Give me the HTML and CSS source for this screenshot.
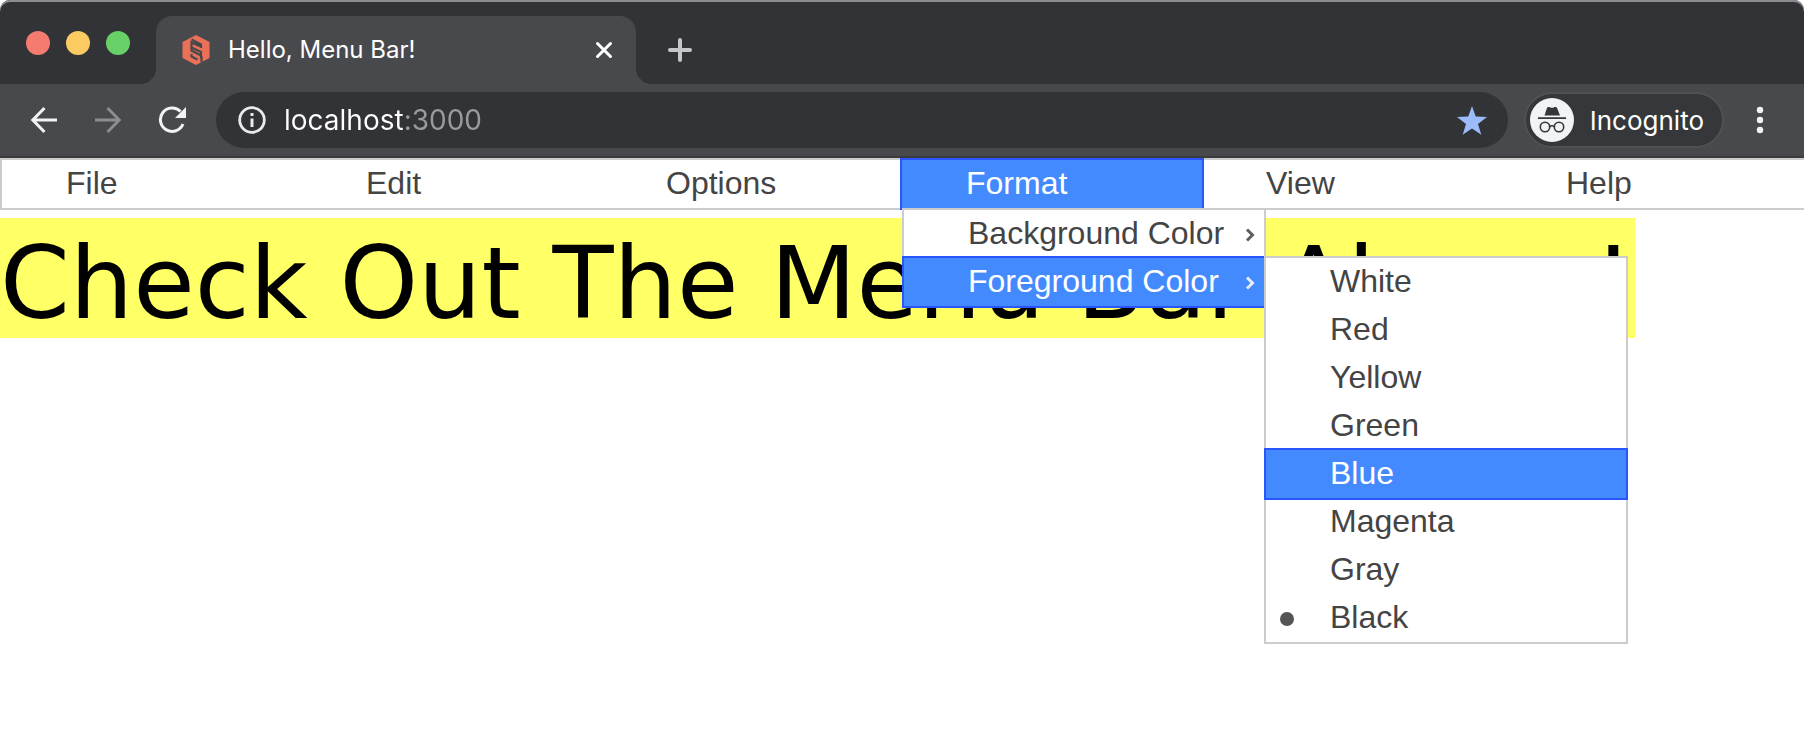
FILE: index.html
```html
<!DOCTYPE html>
<html lang="en">
<head>
<meta charset="utf-8">
<meta name="viewport" content="width=device-width, initial-scale=1">
<title>Hello, Menu Bar!</title>
<link rel="stylesheet" href="styles.css">
</head>
<body>
<header class="chrome">
  <div class="tab-strip">
    <div class="window-controls">
      <button class="light light-close" aria-label="Close window"></button>
      <button class="light light-minimize" aria-label="Minimize window"></button>
      <button class="light light-zoom" aria-label="Zoom window"></button>
    </div>
    <div class="tab">
      <svg class="favicon" viewBox="0 0 28 30" aria-hidden="true">
        <path fill="#ea7157" d="M14 0 27.500 7v16L14 30 .5 23V7z"/>
        <path fill="none" stroke="#48494c" stroke-width="2.200" d="M9.500 4.500 19 9.500v2L9.500 7.500v5l9.500 4.500v3.500M9.500 10.500v5L19 20.500v3M9.500 19v2.500l6 3M19 13v-3M19.500 21v6"/>
      </svg>
      <span class="tab-title">Hello, Menu Bar!</span>
      <button class="icon-button tab-close" aria-label="Close tab">
        <svg width="18" height="18" viewBox="0 0 18 18"><path d="M2.500 2.500l13 13M15.500 2.500l-13 13" stroke="#fff" stroke-width="3" stroke-linecap="round"/></svg>
      </button>
    </div>
    <button class="icon-button new-tab" aria-label="New tab">
      <svg width="24" height="24" viewBox="0 0 24 24"><path d="M12 2v20M2 12h20" stroke="#c5c7cb" stroke-width="4" stroke-linecap="round"/></svg>
    </button>
  </div>
  <div class="toolbar">
    <div class="nav-buttons">
      <button class="icon-button" aria-label="Back">
        <svg width="28" height="28" viewBox="0 0 28 28" fill="none" stroke="#f1f3f4" stroke-width="3"><path d="M27 14H3M14.500 2 2.800 14l11.700 12"/></svg>
      </button>
      <button class="icon-button" aria-label="Forward">
        <svg width="28" height="28" viewBox="0 0 28 28" fill="none" stroke="#8c8d90" stroke-width="3"><path d="M1 14h24M13.500 2l11.700 12-11.700 12"/></svg>
      </button>
      <button class="icon-button" aria-label="Reload">
        <svg width="28" height="28" viewBox="0 0 28 28"><path d="M25 18A11.700 11.700 0 1 1 22.500 5.500" fill="none" stroke="#f1f3f4" stroke-width="3"/><path d="M28 1v11H17z" fill="#f1f3f4"/></svg>
      </button>
    </div>
    <div class="omnibox">
      <button class="icon-button" aria-label="Site information">
        <svg width="28" height="28" viewBox="0 0 28 28"><circle cx="14" cy="14" r="12.300" fill="none" stroke="#e8eaed" stroke-width="2.800"/><path d="M14 7v3M14 12.500v8.500" stroke="#e8eaed" stroke-width="3"/></svg>
      </button>
      <input class="address" type="text" value="localhost:3000" aria-label="Address" spellcheck="false">
      <button class="icon-button" aria-label="Bookmark this page">
        <svg width="30" height="29" viewBox="0 0 30 29"><path fill="#9bbcf8" d="M15 0l3.700 10.600L30 10.900l-9 7 3.300 10.900L15 22.400 5.700 28.800 9 17.900l-9-7 11.300-.3z"/></svg>
      </button>
    </div>
    <button class="incognito">
      <svg width="44" height="44" viewBox="0 0 44 44" aria-hidden="true">
        <circle cx="22" cy="22" r="22" fill="#f1f3f4"/>
        <path fill="#36373a" d="M18.500 9c1.500 0 2 .8 3.500.8S24 9 25.500 9c1 0 1.500.6 1.800 1.500L30 17.500H14.500l2.300-7C17.100 9.600 17.500 9 18.500 9zM8 19.300h28v1.700H8z"/>
        <g fill="none" stroke="#36373a" stroke-width="1.600"><circle cx="15" cy="29" r="4.700"/><circle cx="29" cy="29" r="4.700"/><path d="M19.700 28.500q2.300-1.600 4.600 0"/></g>
      </svg>
      <span>Incognito</span>
    </button>
    <button class="icon-button more" aria-label="Browser menu">
      <svg width="8" height="28" viewBox="0 0 8 28" fill="#f1f3f4"><circle cx="4" cy="4" r="3.200"/><circle cx="4" cy="14" r="3.200"/><circle cx="4" cy="24" r="3.200"/></svg>
    </button>
  </div>
</header>
<main>
  <nav aria-label="Menu bar">
    <ul class="menubar" role="menubar">
      <li><button class="item" role="menuitem">File</button></li>
      <li><button class="item" role="menuitem">Edit</button></li>
      <li><button class="item" role="menuitem">Options</button></li>
      <li>
        <button class="item active" role="menuitem" aria-haspopup="true" aria-expanded="true">Format</button>
        <ul class="menu dropdown" role="menu" aria-label="Format">
          <li>
            <button class="item" role="menuitem" aria-haspopup="true">Background Color
              <svg class="chevron" width="10" height="14" viewBox="0 0 10 14"><path d="M2 1.500 7.500 7 2 12.500" fill="none" stroke="currentColor" stroke-width="3"/></svg>
            </button>
          </li>
          <li>
            <button class="item active" role="menuitem" aria-haspopup="true" aria-expanded="true">Foreground Color
              <svg class="chevron" width="10" height="14" viewBox="0 0 10 14"><path d="M2 1.500 7.500 7 2 12.500" fill="none" stroke="currentColor" stroke-width="3"/></svg>
            </button>
            <ul class="menu submenu" role="menu" aria-label="Foreground Color">
              <li><button class="item" role="menuitemradio" aria-checked="false">White</button></li>
              <li><button class="item" role="menuitemradio" aria-checked="false">Red</button></li>
              <li><button class="item" role="menuitemradio" aria-checked="false">Yellow</button></li>
              <li><button class="item" role="menuitemradio" aria-checked="false">Green</button></li>
              <li><button class="item active" role="menuitemradio" aria-checked="false">Blue</button></li>
              <li><button class="item" role="menuitemradio" aria-checked="false">Magenta</button></li>
              <li><button class="item" role="menuitemradio" aria-checked="false">Gray</button></li>
              <li><button class="item" role="menuitemradio" aria-checked="true">Black</button></li>
            </ul>
          </li>
        </ul>
      </li>
      <li><button class="item" role="menuitem">View</button></li>
      <li><button class="item" role="menuitem">Help</button></li>
    </ul>
  </nav>
  <h1 class="banner">Check Out The Menu Bar Above!</h1>
</main>
</body>
</html>
```
FILE: styles.css
```css
* {
  box-sizing: border-box;
}

body {
  min-height: 100vh;
  margin: 0;
  background: #fff;
  font-family: "Liberation Sans", Arial, sans-serif;
}

button {
  margin: 0;
  padding: 0;
  border: 0;
  background: none;
  color: inherit;
  font: inherit;
}

ul {
  margin: 0;
  padding: 0;
  list-style: none;
}

/* Browser window */
.chrome {
  border-bottom: 2px solid #3b3b3d;
  border-radius: 10px 10px 0 0;
  background: #323337;
  box-shadow: inset 0 2px #8b8c8e;
  color: #fff;
  font-family: Inter, sans-serif;
}

.tab-strip {
  display: flex;
  height: 84px;
  padding-top: 16px;
}

.window-controls {
  display: flex;
  gap: 16px;
  width: 156px;
  padding: 15px 0 0 26px;
}

.light {
  width: 24px;
  height: 24px;
  border-radius: 50%;
}

.light-close {
  background: #f57b70;
}

.light-minimize {
  background: #fbca61;
}

.light-zoom {
  background: #67d067;
}

.tab {
  position: relative;
  display: flex;
  align-items: center;
  width: 480px;
  padding: 0 23px 0 26px;
  border-radius: 16px 16px 0 0;
  background: #48494c;
}

.tab::before,
.tab::after {
  content: "";
  position: absolute;
  bottom: 0;
  width: 16px;
  height: 16px;
}

.tab::before {
  right: 100%;
  background: radial-gradient(circle at 0 0, transparent 16px, #48494c 16px);
}

.tab::after {
  left: 100%;
  background: radial-gradient(circle at 100% 0, transparent 16px, #48494c 16px);
}

.favicon {
  width: 28px;
  height: 30px;
}

.tab-title {
  flex: 1;
  margin-left: 18px;
  font-size: 24px;
  line-height: 32px;
}

.icon-button {
  display: flex;
  align-items: center;
  justify-content: center;
}

.new-tab {
  margin-left: 32px;
}

.toolbar {
  display: flex;
  align-items: center;
  height: 72px;
  padding-right: 40px;
  background: #48494c;
}

.nav-buttons {
  display: flex;
  gap: 36px;
  width: 216px;
  padding-left: 30px;
}

.omnibox {
  display: flex;
  flex: 1;
  align-items: center;
  height: 56px;
  padding: 0 21px 0 22px;
  border-radius: 28px;
  background: #323337;
}

.address {
  flex: 1;
  min-width: 0;
  height: 40px;
  margin-left: 2px;
  padding: 0 16px;
  border: 0;
  outline: 0;
  background: linear-gradient(90deg, #fff 135px, #9a9b9d 135px);
  background-clip: text;
  color: transparent;
  font-family: Inter, sans-serif;
  font-size: 28px;
}

.incognito {
  display: flex;
  align-items: center;
  gap: 16px;
  height: 56px;
  margin: 0 32px 0 16px;
  padding: 0 18px 0 4px;
  border: 2px solid #505154;
  border-radius: 28px;
  background: #36373a;
  font-size: 26px;
}

/* Menu bar */
.menubar {
  display: flex;
  border: 2px solid #ccc;
  border-right: 0;
  color: #444;
  font-size: 32px;
  line-height: 46px;
}

.menubar > li {
  flex: 0 0 300px;
}

.menubar li {
  position: relative;
}

.item {
  display: block;
  width: 100%;
  padding: 0 0 2px 64px;
  text-align: left;
  white-space: nowrap;
}

.item.active {
  background: #448aff;
  outline: 2px solid #2a56ff;
  color: #fff;
}

.menu {
  position: absolute;
  width: 364px;
  border: 2px solid #ccc;
  background: #fff;
}

.dropdown {
  top: 100%;
  left: 0;
  z-index: 1;
}

.submenu {
  top: -2px;
  left: 100%;
}

.chevron {
  position: absolute;
  top: 18px;
  right: 9px;
  opacity: 0.85;
}

.item[aria-checked="true"]::before {
  content: "";
  position: absolute;
  top: 18px;
  left: 14px;
  width: 14px;
  height: 14px;
  border-radius: 50%;
  background: #555;
}

.banner {
  width: fit-content;
  margin: 8px 0 0;
  padding: 12px 2px 0 0;
  background: #ffff66;
  color: #000;
  font-family: Verdana, "DejaVu Sans", sans-serif;
  font-size: 100px;
  font-weight: 400;
  line-height: 108px;
  white-space: nowrap;
}
```
